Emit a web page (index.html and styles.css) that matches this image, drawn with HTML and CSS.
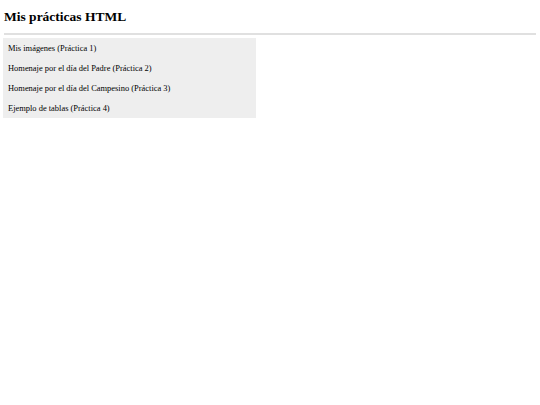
FILE: index.html
```html
<!DOCTYPE html>
<html lang="es">
<head>
<meta charset="utf-8">
<title>Mis prácticas HTML</title>
<link rel="stylesheet" href="styles.css">
</head>
<body>
<header class="header">
  <h1 class="title">Mis prácticas HTML</h1>
</header>
<nav class="menu">
  <a class="item" href="#">Mis imágenes (Práctica 1)</a>
  <a class="item" href="#">Homenaje por el día del Padre (Práctica 2)</a>
  <a class="item" href="#">Homenaje por el día del Campesino (Práctica 3)</a>
  <a class="item" href="#">Ejemplo de tablas (Práctica 4)</a>
</nav>
</body>
</html>
```

FILE: styles.css
```css
html, body {
  margin: 0;
  padding: 0;
  background: #fff;
}
body {
  font-family: "Liberation Serif", "Times New Roman", serif;
  color: #000;
  padding: 0 4px;
}
.header {
  padding-top: 9px;
  padding-bottom: 9px;
  border-bottom: 2px solid #e0e0e0;
}
.title {
  margin: 0;
  font-size: 13.5px;
  font-weight: bold;
  line-height: 15px;
}
.menu {
  margin-top: 3px;
  margin-left: -1px;
  width: 253px;
  background: #eeeeee;
  display: flex;
  flex-direction: column;
}
.item {
  display: block;
  font-size: 8.45px;
  line-height: 20px;
  padding-left: 5px;
  color: #000;
  text-decoration: none;
}
```
